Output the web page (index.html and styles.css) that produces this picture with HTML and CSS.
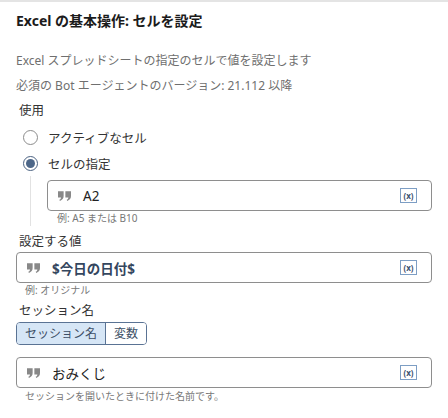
FILE: index.html
```html
<!DOCTYPE html>
<html lang="ja">
<head>
<meta charset="UTF-8">
<title>セルを設定</title>
<link rel="stylesheet" href="styles.css">
</head>
<body>

<div class="panel">
    <h1 class="panel-title">Excel の基本操作: セルを設定</h1>

    <div class="desc">
        <p>Excel スプレッドシートの指定のセルで値を設定します</p>
        <p>必須の Bot エージェントのバージョン: 21.112 以降</p>
    </div>

    <div class="field-label use-label">使用</div>
    <div class="radio-group">
        <div class="radio-row">
            <span class="radio"></span>
            <span>アクティブなセル</span>
        </div>
        <div class="radio-row">
            <span class="radio checked"></span>
            <span>セルの指定</span>
        </div>
    </div>

    <div class="nested">
        <div class="text-input">
            <svg class="quote" viewBox="0 0 12 9" width="13" height="10"><path d="M0 0h5.2v4.6C5.2 6.8 4 8.4 1.8 9L1.2 8c1-.5 1.5-1.2 1.6-2.2H0zM6.8 0H12v4.6C12 6.8 10.8 8.4 8.6 9L8 8c1-.5 1.5-1.2 1.6-2.2H6.8z" fill="#888"/></svg>
            <span class="value">A2</span>
            <span class="var-btn">(x)</span>
        </div>
        <div class="hint">例: A5 または B10</div>
    </div>

    <div class="field-label">設定する値</div>
    <div class="text-input">
        <svg class="quote" viewBox="0 0 12 9" width="13" height="10"><path d="M0 0h5.2v4.6C5.2 6.8 4 8.4 1.8 9L1.2 8c1-.5 1.5-1.2 1.6-2.2H0zM6.8 0H12v4.6C12 6.8 10.8 8.4 8.6 9L8 8c1-.5 1.5-1.2 1.6-2.2H6.8z" fill="#888"/></svg>
        <span class="value variable">$今日の日付$</span>
        <span class="var-btn">(x)</span>
    </div>
    <div class="hint">例: オリジナル</div>

    <div class="field-label session-label">セッション名</div>
    <div class="segmented">
        <span class="segment active">セッション名</span>
        <span class="segment">変数</span>
    </div>

    <div class="text-input session-input">
        <svg class="quote" viewBox="0 0 12 9" width="13" height="10"><path d="M0 0h5.2v4.6C5.2 6.8 4 8.4 1.8 9L1.2 8c1-.5 1.5-1.2 1.6-2.2H0zM6.8 0H12v4.6C12 6.8 10.8 8.4 8.6 9L8 8c1-.5 1.5-1.2 1.6-2.2H6.8z" fill="#888"/></svg>
        <span class="value">おみくじ</span>
        <span class="var-btn">(x)</span>
    </div>
    <div class="hint">セッションを開いたときに付けた名前です。</div>
</div>

</body>
</html>
```

FILE: styles.css
```css
body {
    margin: 0;
    background: #fff;
    font-family: "Noto Sans", "Noto Sans CJK JP", sans-serif;
    color: #333;
}
.panel {
    border-top: 2px solid #e4e4e4;
    padding: 9px 16px 0 16px;
}
.panel-title {
    margin: 0;
    font-size: 14px;
    line-height: 20px;
    font-weight: bold;
    color: #1b1b1b;
}
.desc {
    margin-top: 17px;
    font-size: 12px;
    line-height: 25px;
    color: #6f6f6f;
}
.desc p {
    margin: 0;
}
.field-label {
    font-size: 12.5px;
    line-height: 20px;
    color: #333;
    padding-left: 3px;
}
.use-label {
    margin-top: 3px;
}
.radio-group {
    padding-top: 3px;
}
.radio-row {
    display: flex;
    align-items: center;
    height: 26px;
    padding-left: 7px;
    font-size: 12.5px;
    color: #333;
}
.radio {
    width: 13px;
    height: 13px;
    border: 1px solid #8c8c8c;
    border-radius: 50%;
    margin-right: 10px;
    display: flex;
    align-items: center;
    justify-content: center;
}
.radio.checked {
    border-color: #4b6282;
}
.radio.checked::after {
    content: "";
    width: 9px;
    height: 9px;
    border-radius: 50%;
    background: #4d6789;
}
.nested {
    margin-left: 14px;
    border-left: 1px solid #e2e2e2;
    padding: 4px 0 1px 16px;
}
.text-input {
    display: flex;
    align-items: center;
    height: 29px;
    border: 1px solid #8e8e8e;
    border-radius: 4px;
    padding: 0 14px 0 10px;
}
.quote {
    flex: none;
}
.value {
    flex: 1;
    margin-left: 12px;
    font-size: 13.5px;
    color: #222;
}
.value.variable {
    font-weight: bold;
    color: #34465e;
}
.var-btn {
    flex: none;
    width: 15px;
    height: 13px;
    border: 1px solid #7d9ec4;
    font-size: 8px;
    line-height: 13px;
    text-align: center;
    font-weight: bold;
    color: #3c5270;
}
.hint {
    font-size: 10px;
    line-height: 14px;
    color: #777;
    padding-left: 9px;
}
.nested .hint {
    padding-left: 10px;
}
.nested + .field-label {
    margin-top: 6px;
}
.session-label {
    margin-top: 4px;
}
.segmented {
    display: inline-flex;
    border: 1px solid #5a7394;
    border-radius: 4px;
    overflow: hidden;
}
.segment {
    font-size: 12px;
    line-height: 21px;
    padding: 0 8px;
    color: #3d4f66;
    background: #fff;
}
.segment.active {
    background: #d6e6f6;
    border-right: 1px solid #5a7394;
}
.session-input {
    margin-top: 12px;
}
.session-input + .hint {
    margin-top: 1px;
}
```
